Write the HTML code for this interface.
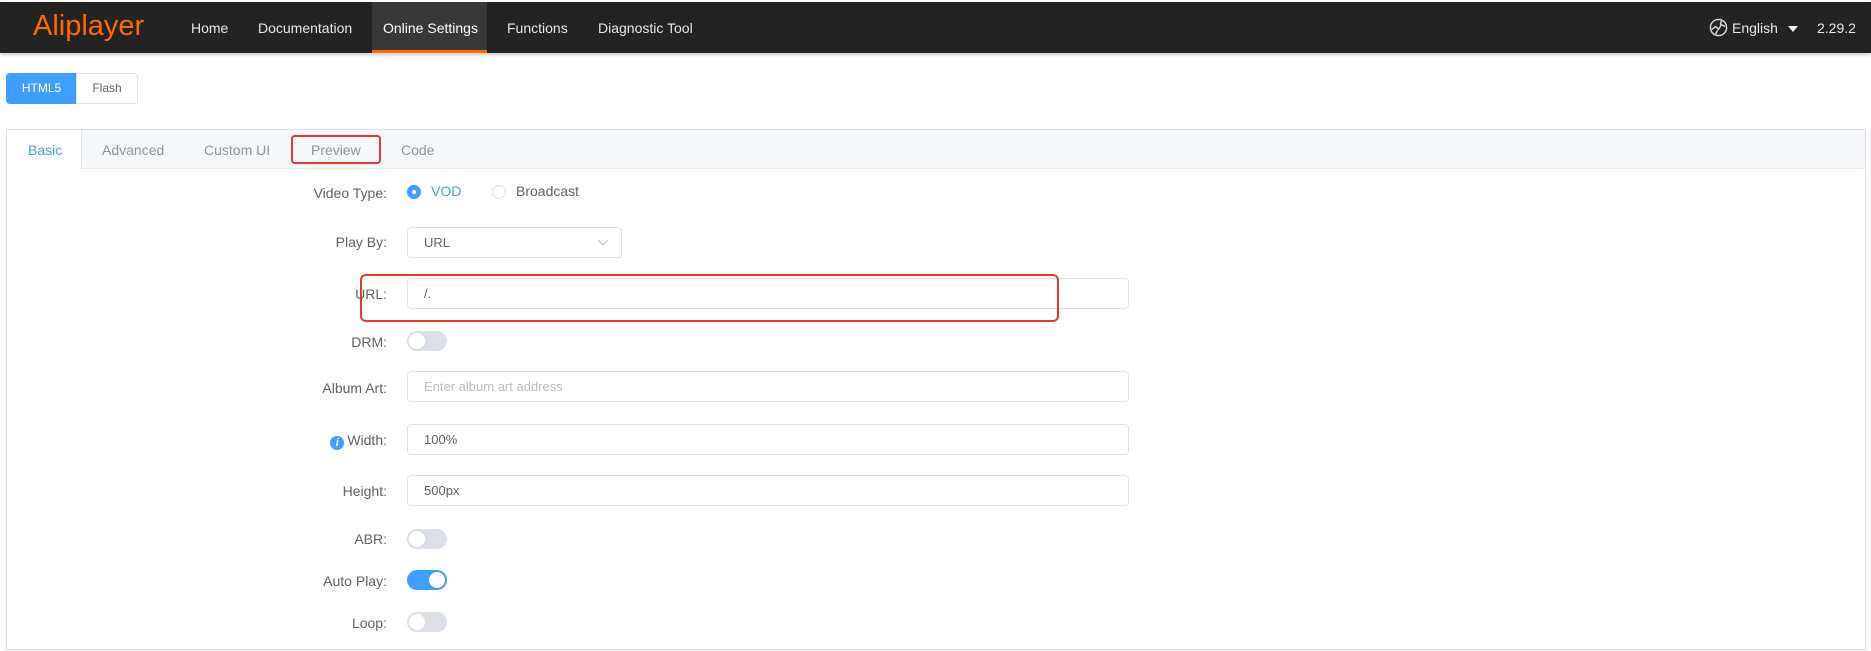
<!DOCTYPE html>
<html><head><meta charset="utf-8"><style>
*{box-sizing:border-box;margin:0;padding:0}
body{width:1871px;height:651px;overflow:hidden;background:#fff;font-family:"Liberation Sans",Arial,sans-serif;position:relative;color:#606266}
.nav{position:absolute;left:0;top:2px;width:1871px;height:51px;background:#232323;box-shadow:0 2px 4px rgba(0,0,0,.2)}
.logo{position:absolute;left:33px;top:8px;font-size:29px;color:#ff6a00}
.m{position:absolute;top:18px;font-size:14px;color:#e8e8e8}
.act{position:absolute;left:372px;top:0;width:115px;height:51px;background:#383838;border-bottom:3px solid #ff6a00}
.btn{position:absolute;top:73px;height:31px;font-size:12px;line-height:29px;text-align:center;border:1px solid #dcdfe6}
.tabs{position:absolute;left:6px;top:129px;width:1860px;height:521px;border:1px solid #dcdfe6;box-shadow:0 1px 4px rgba(0,0,0,.08)}
.th{position:absolute;left:0;top:0;width:100%;height:39px;background:#f5f7fa;border-bottom:1px solid #e4e7ed}
.tb{position:absolute;top:12px;font-size:14px;color:#909399}
.lab{position:absolute;right:1484px;font-size:14px;color:#606266;text-align:right;white-space:nowrap}
.inp{position:absolute;left:407px;width:722px;height:31px;border:1px solid #dcdfe6;border-radius:4px;font-size:13px;line-height:29px;padding-left:16px;color:#606266}
.tg{position:absolute;left:407px;width:40px;height:20px;border-radius:10px;background:#dcdfe6}
.tg::after{content:"";position:absolute;left:2px;top:2px;width:16px;height:16px;border-radius:50%;background:#fff}
.tg.on{background:#409eff}.tg.on::after{left:22px}
.red{position:absolute;border:2px solid #e8382a;border-radius:4px}
</style></head><body>
<div class="nav">
<div class="logo">Aliplayer</div>
<div class="act"></div>
<div class="m" style="left:191px">Home</div>
<div class="m" style="left:258px">Documentation</div>
<div class="m" style="left:383px;color:#fff">Online Settings</div>
<div class="m" style="left:507px">Functions</div>
<div class="m" style="left:598px">Diagnostic Tool</div>
<svg style="position:absolute;left:1709px;top:16px" width="19" height="19" viewBox="0 0 20 20" fill="none" stroke="#ddd" stroke-width="1.5"><circle cx="10" cy="10" r="8.5"/><path d="M3 12l4-3 3 3 3-5 4 2M7 17l2-4M13 3l-1 4"/></svg>
<div class="m" style="left:1732px">English</div>
<div style="position:absolute;left:1788px;top:24px;border:5px solid transparent;border-top:6px solid #eee"></div>
<div class="m" style="left:1817px">2.29.2</div>
</div>
<div class="btn" style="left:6px;width:71px;background:#409eff;color:#fff;border-color:#409eff;border-radius:4px 0 0 4px">HTML5</div>
<div class="btn" style="left:76px;width:62px;color:#606266;border-radius:0 4px 4px 0">Flash</div>
<div class="tabs">
<div class="th"></div>
<div style="position:absolute;left:0;top:0;width:75px;height:40px;background:#fff;border-right:1px solid #e4e7ed"></div>
<div class="tb" style="left:21px;color:#409eff">Basic</div>
<div class="tb" style="left:95px">Advanced</div>
<div class="tb" style="left:197px">Custom UI</div>
<div class="tb" style="left:304px">Preview</div>
<div class="tb" style="left:394px">Code</div>
</div>
<div class="red" style="left:291px;top:135px;width:90px;height:29px"></div>
<div class="lab" style="top:185px">Video Type:</div>
<div style="position:absolute;left:407px;top:185px;width:14px;height:14px;border-radius:50%;background:#409eff"><div style="position:absolute;left:5px;top:5px;width:4px;height:4px;border-radius:50%;background:#fff"></div></div>
<div style="position:absolute;left:431px;top:183px;font-size:14px;color:#409eff">VOD</div>
<div style="position:absolute;left:492px;top:185px;width:14px;height:14px;border-radius:50%;border:1px solid #dcdfe6"></div>
<div style="position:absolute;left:516px;top:183px;font-size:14px">Broadcast</div>
<div class="lab" style="top:234px">Play By:</div>
<div class="inp" style="top:227px;width:215px">URL<svg style="position:absolute;right:12px;top:11px" width="12" height="8" viewBox="0 0 12 8" fill="none" stroke="#c0c4cc" stroke-width="1.2"><path d="M1 1l5 5 5-5"/></svg></div>
<div class="lab" style="top:286px">URL:</div>
<div class="inp" style="top:278px">/.</div>
<div class="red" style="left:360px;top:274px;width:699px;height:48px;border-radius:6px"></div>
<div class="lab" style="top:334px">DRM:</div>
<div class="tg" style="top:331px"></div>
<div class="lab" style="top:380px">Album Art:</div>
<div class="inp" style="top:371px;color:#b8bbc2">Enter album art address</div>
<div class="lab" style="top:432px"><span style="display:inline-block;width:14px;height:14px;border-radius:50%;background:#409eff;color:#fff;font-size:11px;font-style:italic;font-weight:bold;text-align:center;line-height:14px;margin-right:3px;vertical-align:-1px">i</span>Width:</div>
<div class="inp" style="top:424px">100%</div>
<div class="lab" style="top:483px">Height:</div>
<div class="inp" style="top:475px">500px</div>
<div class="lab" style="top:531px">ABR:</div>
<div class="tg" style="top:529px"></div>
<div class="lab" style="top:573px">Auto Play:</div>
<div class="tg on" style="top:570px"></div>
<div class="lab" style="top:615px">Loop:</div>
<div class="tg" style="top:612px"></div>
</body></html>
